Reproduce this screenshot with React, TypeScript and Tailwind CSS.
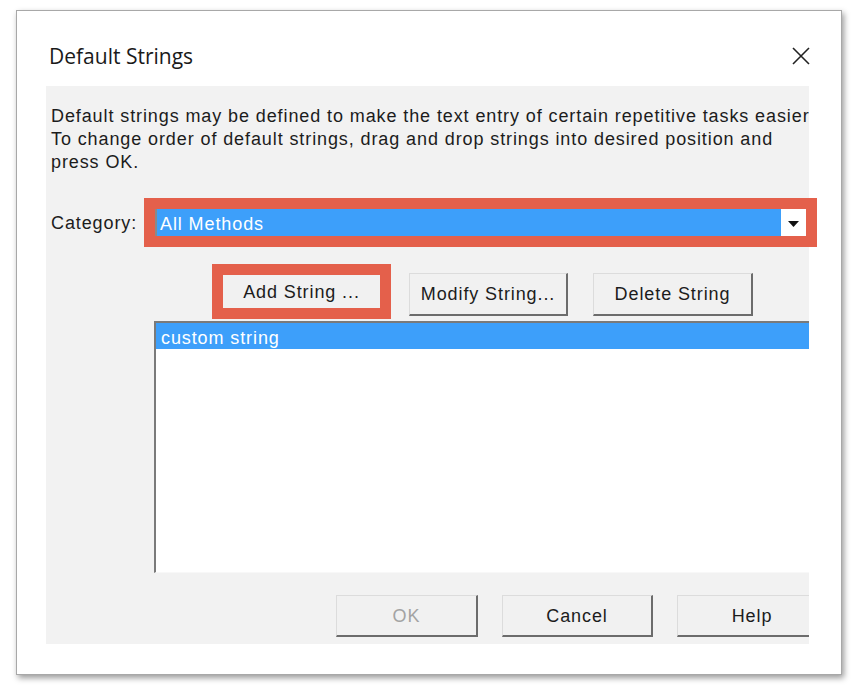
import React from 'react';

const body = { fontFamily: '"Liberation Sans", Arial, sans-serif' };

const Btn = ({ label, className = '', disabled = false }: { label: string; className?: string; disabled?: boolean }) => (
    <div
        className={`flex items-center justify-center pt-[1px] bg-[#f1f1f1] border-t border-l border-t-[#dcdcdc] border-l-[#dcdcdc] border-r-2 border-b-2 border-r-[#6c6c6c] border-b-[#6c6c6c] text-[18px] tracking-[0.9px] shrink-0 ${disabled ? 'text-[#a3a3a3]' : 'text-[#1c1c1c]'} ${className}`}
    >
        {label}
    </div>
);

const App = () => {
    return (
        <div className="min-h-screen bg-white pl-[16px] pt-[10px]" style={body}>
            <div className="w-[826px] h-[665px] bg-white border border-[#a8a8a8] shadow-[2px_3px_6px_rgba(0,0,0,0.4)]">
                {/* title bar */}
                <div className="h-[75px] flex items-start justify-between">
                    <div
                        className="pl-[32px] pt-[32px] text-[21px] leading-[26px] text-[#1a1a1a]"
                        style={{ fontFamily: '"Open Sans", "Noto Sans", sans-serif' }}
                    >
                        Default Strings
                    </div>
                    <svg width="20" height="20" viewBox="0 0 20 20" className="mt-[35px] mr-[30px]">
                        <path d="M2 2 L18 18 M18 2 L2 18" stroke="#222" strokeWidth="1.6" fill="none" />
                    </svg>
                </div>

                {/* dialog body */}
                <div className="ml-[29px] w-[763px] h-[558px] bg-[#f2f2f2] flex flex-col text-[18px] tracking-[0.9px] text-[#1c1c1c]">
                    <div className="pt-[19px] pl-[5px] leading-[23px] whitespace-nowrap overflow-hidden">
                        <div>Default strings may be defined to make the text entry of certain repetitive tasks easier</div>
                        <div>To change order of default strings, drag and drop strings into desired position and</div>
                        <div>press OK.</div>
                    </div>

                    {/* category */}
                    <div className="mt-[24px] flex items-center">
                        <div className="w-[98px] shrink-0 pl-[5px] pt-[2px]">Category:</div>
                        <div className="w-[673px] h-[49px] border-[11px] border-[#e4604b] flex shrink-0">
                            <div className="w-[2px] bg-[#8a8a8a]" />
                            <div className="flex-1 bg-[#3d9ffa] text-white leading-[27px] pt-[2px] pl-[3px]">All Methods</div>
                            <div className="w-[25px] bg-white flex items-center justify-center pt-[2px]">
                                <svg width="11" height="6" viewBox="0 0 11 6">
                                    <path d="M0 0 H11 L5.5 6 Z" fill="#111" />
                                </svg>
                            </div>
                        </div>
                    </div>

                    {/* string buttons */}
                    <div className="mt-[17px] flex items-start">
                        <div className="ml-[166px] w-[179px] h-[55px] border-[11px] border-[#e4604b] shrink-0">
                            <div className="w-full h-full bg-[#f1f1f1] flex items-center justify-center pt-[2px]">
                                Add String ...
                            </div>
                        </div>
                        <Btn label="Modify String..." className="ml-[18px] mt-[9px] w-[159px] h-[43px]" />
                        <Btn label="Delete String" className="ml-[25px] mt-[9px] w-[160px] h-[43px]" />
                    </div>

                    {/* list */}
                    <div className="mt-[2px] ml-[108px] w-[655px] h-[252px] bg-white border-t-2 border-l-2 border-t-[#7a7a7a] border-l-[#7a7a7a] border-b border-b-[#f8f8f8]">
                        <div className="h-[26px] bg-[#3d9ffa] text-white leading-[26px] pt-[2px] pl-[5px]">custom string</div>
                    </div>

                    {/* footer buttons */}
                    <div className="mt-[22px] flex overflow-hidden">
                        <Btn label="OK" disabled className="ml-[290px] w-[142px] h-[42px]" />
                        <Btn label="Cancel" className="ml-[24px] w-[151px] h-[42px]" />
                        <Btn label="Help" className="ml-[24px] w-[151px] h-[42px]" />
                    </div>
                </div>
            </div>
        </div>
    );
};

export default App;
